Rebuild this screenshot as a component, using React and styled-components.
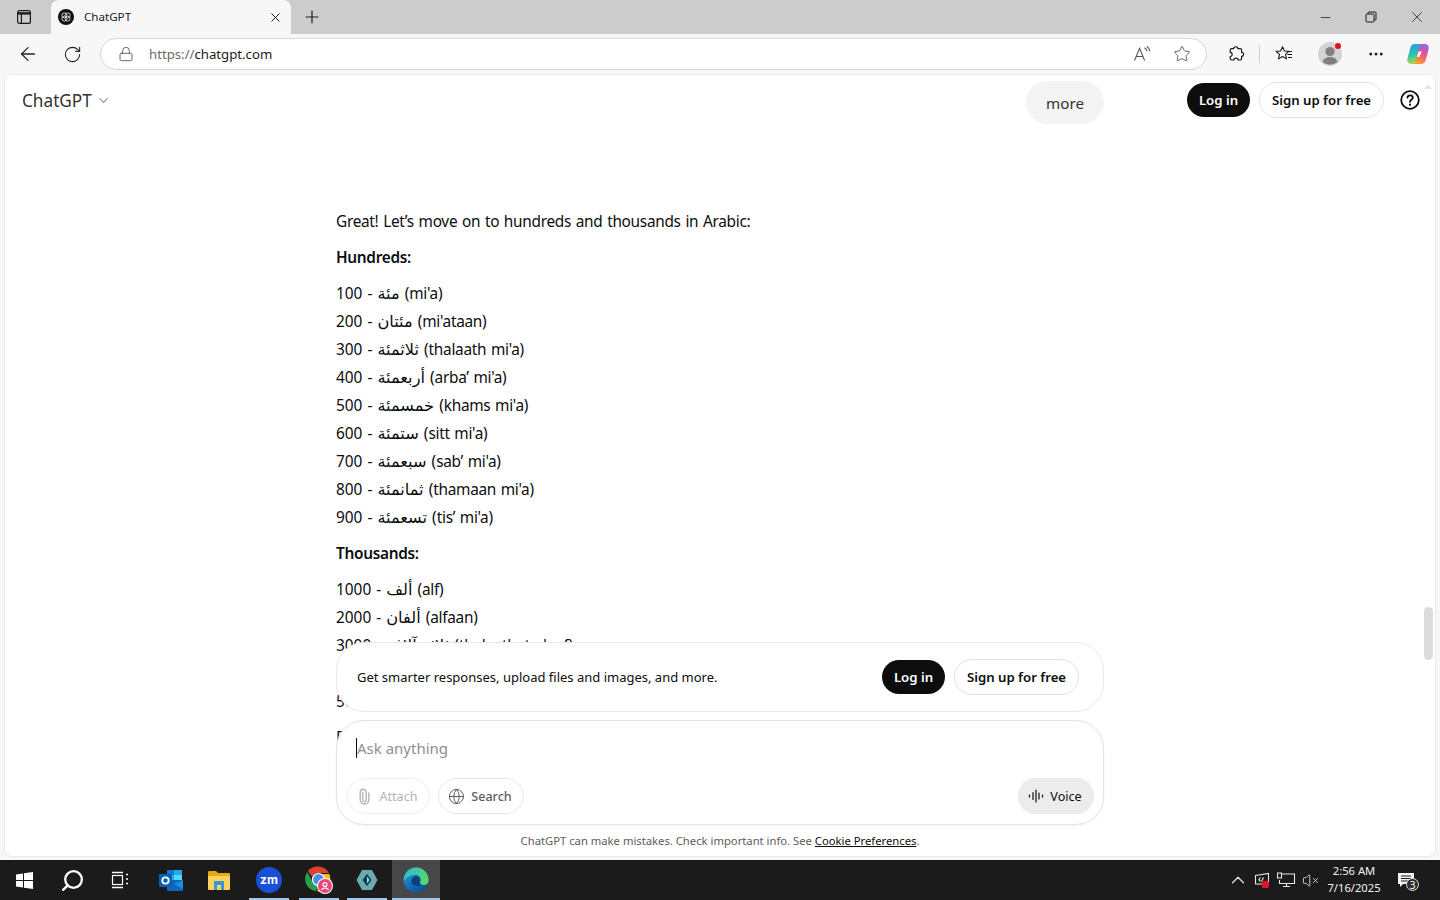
import React from 'react';
import styled, { createGlobalStyle } from 'styled-components';
import {
	ArrowLeft, ChevronDown, ChevronUp, Globe, Lock, Minus, MoreHorizontal,
	Plus, RotateCw, Search as SearchIcon, Star, VolumeX, X,
} from 'lucide-react';

const FONT = '"Noto Sans", "DejaVu Sans", sans-serif';

const GlobalStyle = createGlobalStyle`
	* { box-sizing: border-box; }
	html, body { margin: 0; height: 100%; overflow: hidden; }
	body { font-family: ${FONT}; color: #0d0d0d; background: #f7f7f7; }
	#root { height: 100%; }
`;

const Window = styled.div`
	height: 900px;
	display: flex;
	flex-direction: column;
	background: #f7f7f7;
`;

/* browser chrome */
const TabStrip = styled.div`
	height: 34px;
	flex: none;
	display: flex;
	align-items: center;
	background: #cccccc;
`;

const StripSlot = styled.div`
	width: ${(p) => p.$w || 48}px;
	height: 100%;
	flex: none;
	display: flex;
	align-items: center;
	justify-content: center;
	color: #1a1a1a;
`;

const Tab = styled.div`
	width: 240px;
	height: 34px;
	margin-left: 3px;
	padding: 0 8px 0 7px;
	flex: none;
	display: flex;
	align-items: center;
	background: #f7f7f7;
	border-radius: 8px 8px 0 0;
`;

const TabTitle = styled.span`
	margin-left: 10px;
	padding-bottom: 2px;
	flex: 1;
	font-size: 11.6px;
	color: #1a1a1a;
`;

const StripSpacer = styled.div`
	flex: 1;
`;

const Toolbar = styled.div`
	height: 40px;
	flex: none;
	padding-left: 6px;
	padding-right: 3px;
	display: flex;
	align-items: center;
	background: #f7f7f7;
`;

const ToolSlot = styled.div`
	position: relative;
	width: ${(p) => p.$w || 46}px;
	height: 32px;
	flex: none;
	display: flex;
	align-items: center;
	justify-content: center;
	color: #262626;
`;

const AddressBar = styled.div`
	height: 32px;
	flex: 1;
	margin: 0 6px 0 6px;
	padding: 0 15px 0 17px;
	display: flex;
	align-items: center;
	background: #ffffff;
	border: 1px solid #d6d6d6;
	border-radius: 16px;
	color: #555555;
`;

const Url = styled.div`
	flex: 1;
	margin-left: 15px;
	font-size: 13.2px;
	color: #1a1a1a;
	span { color: #6b6b6b; }
`;

const ReadAloud = styled.div`
	margin-right: 22px;
	display: flex;
	color: #555555;
`;

const ToolDivider = styled.div`
	width: 1px;
	height: 18px;
	margin-right: 1px;
	flex: none;
	background: #d0d0d0;
`;

const ProfileDot = styled.i`
	position: absolute;
	top: 5px;
	left: 28px;
	width: 6px;
	height: 6px;
	border-radius: 50%;
	background: #e0101a;
`;

/* page */
const Frame = styled.main`
	position: relative;
	flex: 1;
	min-height: 0;
	margin: 0 4px 3px;
	overflow: hidden;
	background: #ffffff;
	border: 1px solid #ebebeb;
	border-radius: 8px;
`;

const Thread = styled.div`
	width: 768px;
	margin: 6px auto 0;
	display: flex;
	flex-direction: column;
`;

const UserBubble = styled.div`
	align-self: flex-end;
	height: 43px;
	margin-bottom: 84px;
	padding: 0 20px;
	display: flex;
	align-items: center;
	font-size: 15.2px;
	background: #f4f4f4;
	border-radius: 22px;
	color: #333333;
`;

const Para = styled.p`
	margin: 0 0 8px;
	font-size: 15.4px;
	line-height: 28px;
	letter-spacing: -0.3px;
	word-spacing: 1px;
	font-weight: ${(p) => (p.$bold ? 600 : 400)};
`;

const NumberList = styled.div`
	margin-bottom: 8px;
`;

const NumberRow = styled.div`
	font-size: 15.4px;
	line-height: 28px;
	letter-spacing: -0.3px;
	word-spacing: 1px;
`;

const Arabic = styled.span`
	font-size: 16.2px;
	line-height: 1;
	letter-spacing: 0;
`;

const PageHeader = styled.header`
	position: absolute;
	top: 0;
	left: 0;
	right: 0;
	height: 50px;
	padding: 0 14px 0 17px;
	display: flex;
	align-items: center;
`;

const Brand = styled.div`
	flex: 1;
	display: flex;
	align-items: center;
	gap: 4px;
	font-size: 17.2px;
	color: #333333;
	svg { color: #8f8f8f; margin-top: 1px; }
`;

const PillButton = styled.button`
	height: ${(p) => (p.$primary ? 34 : 36)}px;
	padding: 0;
	width: ${(p) => (p.$primary ? 63 : 125)}px;
	flex: none;
	font-family: ${FONT};
	font-size: 13.2px;
	font-weight: 600;
	border-radius: 18px;
	color: ${(p) => (p.$primary ? '#ffffff' : '#0d0d0d')};
	background: ${(p) => (p.$primary ? '#0d0d0d' : '#ffffff')};
	border: ${(p) => (p.$primary ? 'none' : '1px solid #e3e3e3')};
	& + & { margin-left: 9px; }
`;

const HelpSlot = styled.div`
	margin-left: 15px;
	display: flex;
`;

const ScrollThumb = styled.div`
	position: absolute;
	top: 532px;
	right: 2px;
	width: 9px;
	height: 53px;
	border-radius: 5px;
	background: #dcdcdc;
`;

const ScrollArrow = styled.div`
	position: absolute;
	top: 9px;
	right: 3px;
	width: 0;
	height: 0;
	border-left: 4px solid transparent;
	border-right: 4px solid transparent;
	border-bottom: 5px solid #e6e6e6;
`;

const Dock = styled.div`
	position: absolute;
	left: 0;
	right: 0;
	bottom: 7px;
	width: 768px;
	margin: 0 auto;
	display: flex;
	flex-direction: column;
	gap: 8px;
`;

const PromoCard = styled.div`
	height: 70px;
	padding: 0 24px 0 20px;
	display: flex;
	align-items: center;
	background: #ffffff;
	border: 1px solid #e8e8e8;
	border-radius: 28px;
`;

const PromoText = styled.div`
	flex: 1;
	font-size: 13px;
`;

const Composer = styled.div`
	height: 105px;
	padding: 17px 9px 10px 10px;
	display: flex;
	flex-direction: column;
	justify-content: space-between;
	background: #ffffff;
	border: 1px solid #e3e3e3;
	border-radius: 28px;
	box-shadow: 0 2px 4px rgba(0, 0, 0, 0.03);
`;

const Prompt = styled.div`
	height: 20px;
	margin-left: 9px;
	display: flex;
	align-items: center;
	font-size: 15px;
	color: #8f8f8f;
	border-left: 1px solid #0d0d0d;
`;

const ComposerActions = styled.div`
	display: flex;
	align-items: center;
	gap: 8px;
`;

const ActionChip = styled.div`
	width: ${(p) => p.$w}px;
	height: 36px;
	padding-right: ${(p) => (p.$muted ? 3 : 2)}px;
	display: flex;
	align-items: center;
	justify-content: center;
	gap: 6px;
	font-size: 12.6px;
	font-weight: ${(p) => (p.$muted ? 400 : 500)};
	border-radius: 18px;
	color: ${(p) => (p.$muted ? '#b4b4b4' : '#5d5d5d')};
	border: 1px solid ${(p) => (p.$muted ? '#f1f1f1' : '#e6e6e6')};
`;

const VoiceChip = styled(ActionChip)`
	margin-left: auto;
	border: none;
	background: #ececec;
	color: #0d0d0d;
	font-weight: 400;
`;

const Disclaimer = styled.div`
	height: 16px;
	text-align: center;
	font-size: 11.25px;
	line-height: 16px;
	color: #5d5d5d;
	a { color: #0d0d0d; text-decoration: underline; }
`;

/* taskbar */
const Taskbar = styled.footer`
	height: 40px;
	flex: none;
	display: flex;
	align-items: center;
	background: #1b1b1b;
	color: #ffffff;
`;

const TaskItem = styled.div`
	position: relative;
	width: 48px;
	height: 40px;
	flex: none;
	margin-left: ${(p) => p.$gap || 0}px;
	display: flex;
	align-items: center;
	justify-content: center;
	background: ${(p) => (p.$active ? '#474747' : 'transparent')};
	${(p) => p.$open && `
		&::after {
			content: '';
			position: absolute;
			left: ${p.$active ? 0 : 4}px;
			right: ${p.$active ? 0 : 4}px;
			bottom: 0;
			height: 2px;
			background: #9cc9ee;
		}
	`}
`;

const Tray = styled.div`
	margin-left: auto;
	height: 100%;
	padding-right: 4px;
	display: flex;
	align-items: center;
`;

const TraySlot = styled.div`
	width: 24px;
	flex: none;
	display: flex;
	align-items: center;
	justify-content: center;
	color: #e8e8e8;
`;

const Clock = styled.div`
	width: 64px;
	padding-bottom: 2px;
	text-align: center;
	font-size: 11.2px;
	line-height: 17px;
	color: #f2f2f2;
`;

const NotifyBadge = styled.span`
	position: absolute;
	right: -5px;
	bottom: -4px;
	width: 13px;
	height: 13px;
	display: flex;
	align-items: center;
	justify-content: center;
	font-size: 10px;
	border-radius: 50%;
	background: #2d2d2d;
	border: 1px solid #e0e0e0;
	color: #ffffff;
`;

const NotifySlot = styled.div`
	position: relative;
	width: 16px;
	height: 14px;
	margin-left: 12px;
	margin-right: 22px;
	display: flex;
`;

/* drawn icons */
const WindowTabsIcon = () => (
	<svg width="16" height="16" viewBox="0 0 16 16" fill="none" stroke="#1a1a1a" strokeWidth="1.2">
		<rect x="1.6" y="1.6" width="12.8" height="12.8" rx="2" />
		<path d="M1.6 4.4h12.8" strokeWidth="2.4" />
		<path d="M5.4 4.4v10" />
	</svg>
);

const Favicon = () => (
	<svg width="16" height="16" viewBox="0 0 16 16" fill="none">
		<circle cx="8" cy="8" r="8" fill="#111111" />
		<g stroke="#d8d8d8" strokeWidth="0.9">
			<circle cx="6.4" cy="6.4" r="2.5" />
			<circle cx="9.6" cy="6.4" r="2.5" />
			<circle cx="6.4" cy="9.6" r="2.5" />
			<circle cx="9.6" cy="9.6" r="2.5" />
		</g>
	</svg>
);

const RestoreIcon = () => (
	<svg width="12" height="12" viewBox="0 0 12 12" fill="none" stroke="#1a1a1a" strokeWidth="1">
		<rect x="1" y="3" width="8" height="8" rx="1" />
		<path d="M3 3V2a1 1 0 0 1 1-1h6a1 1 0 0 1 1 1v6a1 1 0 0 1-1 1H9" />
	</svg>
);

const ReadAloudIcon = () => (
	<svg width="18" height="18" viewBox="0 0 18 18" fill="none" stroke="currentColor" strokeWidth="1.1">
		<path d="M1.5 15.5 6.6 3.4l5 12.1M3.2 11.5h6.8" />
		<path d="M11.5 2.8c1.4.7 2.2 1.8 2.4 3.4M13.8 1.6c1.8 1 2.8 2.5 3 4.6" />
	</svg>
);

const PuzzleIcon = () => (
	<svg width="18" height="18" viewBox="0 0 18 18" fill="none" stroke="#1a1a1a" strokeWidth="1.2" strokeLinejoin="round">
		<path d="M6.8 3.600c-.3-2.500 4.200-2.500 4 0h2.400c.8 0 1.400.6 1.400 1.400v2.300c2.600-.3 2.600 4.300 0 4v2.300c0 .8-.6 1.400-1.400 1.400h-2.200c.3-2.600-4.300-2.600-4 0H4.600c-.8 0-1.400-.6-1.400-1.400v-2.100c2.600.3 2.600-4.400 0-4V5c0-.8.6-1.400 1.400-1.400z" />
	</svg>
);

const FavoritesIcon = () => (
	<svg width="18" height="18" viewBox="0 0 18 18" fill="none" stroke="#1a1a1a" strokeWidth="1.1" strokeLinejoin="round">
		<path d="M7.500 1.800 9.400 6l4.500.4-3.400 3 1 4.500-4-2.400-4 2.400 1-4.500-3.400-3L5.600 6z" />
		<path d="M12.500 9.500h4.500M13 12.500h4M12.500 6.500h4.500" />
	</svg>
);

const ProfileIcon = () => (
	<svg width="24" height="24" viewBox="0 0 24 24">
		<circle cx="12" cy="12" r="12" fill="#d3d3d3" />
		<circle cx="12" cy="9.500" r="4.600" fill="#7f7f7f" />
		<path d="M4.500 20c1-3.600 4-5 7.500-5s6.500 1.400 7.500 5a12 12 0 0 1-15 0z" fill="#7f7f7f" />
	</svg>
);

const CopilotIcon = () => (
	<svg width="24" height="24" viewBox="0 0 24 24">
		<defs>
			<linearGradient id="cpA" x1="0.3" y1="0" x2="0.5" y2="1">
				<stop offset="0" stopColor="#2a9be8" />
				<stop offset="0.5" stopColor="#29c3b0" />
				<stop offset="1" stopColor="#b5d83a" />
			</linearGradient>
			<linearGradient id="cpB" x1="0.7" y1="0" x2="0.4" y2="1">
				<stop offset="0" stopColor="#8f6be8" />
				<stop offset="0.5" stopColor="#ee4f8c" />
				<stop offset="1" stopColor="#f7a12c" />
			</linearGradient>
		</defs>
		<path d="M8.500 2h7.500l-5 17.500c-.4 1.500-1.500 2.500-3 2.500H5.200C2.500 22 .6 19.500 1.400 16.800L4.500 5.200C5 3.300 6.500 2 8.500 2z" fill="url(#cpA)" />
		<path d="M15.500 22H8.500l5-17.500C14 3 15 2 16.500 2h2.300c2.700 0 4.600 2.500 3.800 5.200l-3.100 11.600c-.5 1.900-2 3.200-4 3.200z" fill="url(#cpB)" />
		<path d="M12.600 9.500h3.200l-2.400 5.500h-2.400z" fill="#ffffff" />
	</svg>
);

const HelpIcon = () => (
	<svg width="22" height="22" viewBox="0 0 22 22" fill="none" stroke="#0d0d0d" strokeWidth="1.800" strokeLinecap="round">
		<circle cx="11" cy="11" r="8.800" />
		<path d="M8.400 8.700c.2-1.500 1.300-2.300 2.700-2.300 1.500 0 2.700.9 2.700 2.300 0 2.100-2.800 2-2.800 4.100" />
		<path d="M11 15.700v.1" strokeWidth="2.200" />
	</svg>
);

const ClipIcon = () => (
	<svg width="17" height="17" viewBox="0 0 17 17" fill="none" stroke="currentColor" strokeWidth="1.400" strokeLinecap="round">
		<path d="M6.800 5v7.200c0 1 .7 1.700 1.700 1.700s1.700-.7 1.700-1.700V4.500c0-1.900-1.400-3.200-3-3.200S4.200 2.600 4.200 4.500V12c0 2.200 1.900 4 4.300 4s4.300-1.800 4.300-4V5" />
	</svg>
);

const VoiceBars = () => (
	<svg width="16" height="16" viewBox="0 0 16 16" fill="none" stroke="#0d0d0d" strokeWidth="1.200" strokeLinecap="round">
		<path d="M1.500 7v2M5 4.500v7M8 2v12M11 5v6M14.500 7v2" />
	</svg>
);

const WindowsLogo = () => (
	<svg width="17" height="17" viewBox="0 0 17 17" fill="#ffffff">
		<path d="M0 2.400 7 1.400V8H0zM8 1.300 17 0v8H8zM0 9h7v6.600L0 14.600zM8 9h9v8l-9-1.300z" />
	</svg>
);

const TaskSearchIcon = () => (
	<SearchIcon size={25} strokeWidth={2.2} color="#ffffff" style={{ transform: 'scaleX(-1)' }} />
);

const TaskViewIcon = () => (
	<svg width="18" height="18" viewBox="0 0 18 18" fill="none" stroke="#ffffff" strokeWidth="1.200">
		<rect x="1.500" y="4.500" width="10" height="9" />
		<path d="M1 1.500h11M1 16.500h11M15 3.500h2M15 8h2M15 12.500h2" strokeWidth="1.500" />
	</svg>
);

const OutlookLogo = () => (
	<svg width="26" height="24" viewBox="0 0 26 24">
		<path d="M9 2h15v10H9z" fill="#28a8ea" />
		<path d="M9 2h7v5H9z" fill="#0f78d4" />
		<path d="M16 7h8v5h-8z" fill="#50d9ff" />
		<path d="M9 12h16v10a1 1 0 0 1-1 1H10a1 1 0 0 1-1-1z" fill="#1066b8" />
		<path d="M25 12v9l-9-5z" fill="#1a8fe0" />
		<rect x="1" y="6" width="13" height="13" rx="1" fill="#0a5fb0" />
		<circle cx="7.500" cy="12.500" r="3.200" fill="none" stroke="#ffffff" strokeWidth="1.800" />
	</svg>
);

const ExplorerLogo = () => (
	<svg width="24" height="22" viewBox="0 0 24 22">
		<path d="M1 3a1 1 0 0 1 1-1h7l2 2h11a1 1 0 0 1 1 1v3H1z" fill="#e6a817" />
		<path d="M1 7h22v13a1 1 0 0 1-1 1H2a1 1 0 0 1-1-1z" fill="#fbd35c" />
		<path d="M7 12h10v9h-3v-5h-4v5H7z" fill="#3a95d8" />
	</svg>
);

const ZoomLogo = () => (
	<svg width="26" height="26" viewBox="0 0 26 26">
		<circle cx="13" cy="13" r="13" fill="#1c4fd8" />
		<text x="13" y="17" textAnchor="middle" fontSize="12" fontWeight="700" fill="#ffffff" fontFamily="Inter, sans-serif">zm</text>
	</svg>
);

const ChromeLogo = () => (
	<svg width="30" height="30" viewBox="0 0 30 30">
		<path d="M14 1.500a12.500 12.500 0 0 1 11 6.500H14a6 6 0 0 0-5.700 4.100L3.800 6A12.500 12.500 0 0 1 14 1.500z" fill="#e0402f" />
		<path d="M3.200 7 8.800 17a6 6 0 0 0 6.200 3l-3.300 6.300A12.500 12.500 0 0 1 3.200 7z" fill="#2a9d4a" />
		<path d="M25.300 9A12.500 12.500 0 0 1 13 26.500l5.300-9.700A6 6 0 0 0 18.500 9z" fill="#f4c020" />
		<circle cx="14.500" cy="14.500" r="6" fill="#4a8de8" stroke="#ffffff" strokeWidth="1.200" />
		<circle cx="21" cy="21" r="8" fill="#ffffff" />
		<circle cx="21" cy="21" r="7" fill="#e8447e" />
		<circle cx="21" cy="19.600" r="2" fill="none" stroke="#ffffff" strokeWidth="1.100" />
		<path d="M17.300 25c.9-1.500 2.100-2 3.700-2s2.800.5 3.700 2" fill="none" stroke="#ffffff" strokeWidth="1.100" />
	</svg>
);

const HexLogo = () => (
	<svg width="24" height="24" viewBox="0 0 24 24">
		<path d="M7 2h10l5.500 10L17 22H7L1.500 12z" fill="#6aa9b0" />
		<path d="M12 6l4.500 6-4.500 6-4.500-6z" fill="#123c4a" />
		<path d="M12 8.500l2.500 3.500-2.500 3.500z" fill="#a5e0ea" />
	</svg>
);

const EdgeLogo = () => (
	<svg width="26" height="26" viewBox="0 0 26 26">
		<defs>
			<linearGradient id="edA" x1="0" y1="0" x2="1" y2="0.600">
				<stop offset="0" stopColor="#2fb8d8" />
				<stop offset="1" stopColor="#58d868" />
			</linearGradient>
			<linearGradient id="edB" x1="0" y1="0" x2="0.700" y2="1">
				<stop offset="0" stopColor="#1fa0e8" />
				<stop offset="1" stopColor="#0b4f98" />
			</linearGradient>
		</defs>
		<circle cx="13" cy="13" r="12.500" fill="url(#edB)" />
		<path d="M13 .5A12.500 12.500 0 0 1 25.500 14c0 2.500-2.300 4-5 4-2.300 0-3.500-1.200-3.500-2.300 0-1 .8-1.500.8-3 0-2.700-2.400-5-5.800-5C8 7.700 3.500 10 .8 14 .5 6.500 6.300.5 13 .5z" fill="url(#edA)" />
		<path d="M8.500 14.500c0-3 2.400-5.500 5-5.800 2.200 1 3.500 2.700 3.300 4.800-.6 1.800-.2 3.700 1.900 4.700-3.800 1.200-10.200.4-10.200-3.700z" fill="#0c3f7c" />
	</svg>
);

const TrayRemoteIcon = () => (
	<svg width="18" height="18" viewBox="0 0 18 18" fill="none" stroke="#e8e8e8" strokeWidth="1.100">
		<path d="M2.500 4.500 15.500 2.500v10.500h-13z" />
		<path d="M7.500 6.500 5.800 8.800l1.700 1.700M10.500 6.500l-2 4" />
		<rect x="9" y="10" width="7" height="7" rx="1.500" fill="#e8102a" stroke="none" />
	</svg>
);

const TrayNetworkIcon = () => (
	<svg width="20" height="18" viewBox="0 0 20 18" fill="none" stroke="#e8e8e8" strokeWidth="1.100">
		<path d="M6 3h12.500v9.500h-15V9" />
		<path d="M1.500 2h4v5h-4zM10.500 12.500v3M7 15.500h7" />
	</svg>
);

const NotifyIcon = () => (
	<svg width="16" height="14" viewBox="0 0 16 14">
		<path d="M0 0h16v11H5l-3 3v-3H0z" fill="#f2f2f2" />
		<path d="M3 3h10M3 5.500h10M3 8h7" stroke="#1b1b1b" strokeWidth="1" />
	</svg>
);

const HUNDREDS = [
	['100', 'مئة', "mi'a"],
	['200', 'مئتان', "mi'ataan"],
	['300', 'ثلاثمئة', "thalaath mi'a"],
	['400', 'أربعمئة', "arba’ mi'a"],
	['500', 'خمسمئة', "khams mi'a"],
	['600', 'ستمئة', "sitt mi'a"],
	['700', 'سبعمئة', "sab’ mi'a"],
	['800', 'ثمانمئة', "thamaan mi'a"],
	['900', 'تسعمئة', "tis’ mi'a"],
];

const THOUSANDS = [
	['1000', 'ألف', 'alf'],
	['2000', 'ألفان', 'alfaan'],
	['3000', 'ثلاثة آلاف', 'thalaathat alaaf'],
	['4000', 'أربعة آلاف', 'arba’at alaaf'],
	['5000', 'خمسة آلاف', 'khamsat alaaf'],
];

function Numbers({ rows }) {
	return (
		<NumberList>
			{rows.map(([num, arabic, latin]) => (
				<NumberRow key={num}>
					{num} - <Arabic>{arabic}</Arabic> ({latin})
				</NumberRow>
			))}
		</NumberList>
	);
}

export default function App() {
	return (
		<Window>
			<GlobalStyle />
			<TabStrip>
				<StripSlot>
					<WindowTabsIcon />
				</StripSlot>
				<Tab>
					<Favicon />
					<TabTitle>ChatGPT</TabTitle>
					<X size={15} strokeWidth={1.6} color="#1a1a1a" />
				</Tab>
				<StripSlot $w={42}>
					<Plus size={20} strokeWidth={1.4} />
				</StripSlot>
				<StripSpacer />
				<StripSlot $w={46}>
					<Minus size={15} strokeWidth={1.2} />
				</StripSlot>
				<StripSlot $w={46}>
					<RestoreIcon />
				</StripSlot>
				<StripSlot $w={46}>
					<X size={18} strokeWidth={1} />
				</StripSlot>
			</TabStrip>

			<Toolbar>
				<ToolSlot $w={44}>
					<ArrowLeft size={22} strokeWidth={1.4} />
				</ToolSlot>
				<ToolSlot $w={44}>
					<RotateCw size={19} strokeWidth={1.4} />
				</ToolSlot>
				<AddressBar>
					<Lock size={16} strokeWidth={1.3} />
					<Url>
						<span>https://</span>chatgpt.com
					</Url>
					<ReadAloud>
						<ReadAloudIcon />
					</ReadAloud>
					<Star size={18} strokeWidth={1.2} />
				</AddressBar>
				<ToolSlot>
					<PuzzleIcon />
				</ToolSlot>
				<ToolDivider />
				<ToolSlot>
					<FavoritesIcon />
				</ToolSlot>
				<ToolSlot>
					<ProfileIcon />
					<ProfileDot />
				</ToolSlot>
				<ToolSlot>
					<MoreHorizontal size={18} strokeWidth={2} />
				</ToolSlot>
				<ToolSlot $w={38}>
					<CopilotIcon />
				</ToolSlot>
			</Toolbar>

			<Frame>
				<Thread>
					<UserBubble>more</UserBubble>
					<Para>Great! Let’s move on to hundreds and thousands in Arabic:</Para>
					<Para $bold>Hundreds:</Para>
					<Numbers rows={HUNDREDS} />
					<Para $bold>Thousands:</Para>
					<Numbers rows={THOUSANDS} />
					<Para>Feel free</Para>
				</Thread>

				<PageHeader>
					<Brand>
						ChatGPT
						<ChevronDown size={15} strokeWidth={1.8} />
					</Brand>
					<PillButton $primary>Log in</PillButton>
					<PillButton>Sign up for free</PillButton>
					<HelpSlot>
						<HelpIcon />
					</HelpSlot>
				</PageHeader>

				<ScrollArrow />
				<ScrollThumb />

				<Dock>
					<PromoCard>
						<PromoText>Get smarter responses, upload files and images, and more.</PromoText>
						<PillButton $primary>Log in</PillButton>
						<PillButton>Sign up for free</PillButton>
					</PromoCard>
					<Composer>
						<Prompt>Ask anything</Prompt>
						<ComposerActions>
							<ActionChip $w={83} $muted>
								<ClipIcon />
								Attach
							</ActionChip>
							<ActionChip $w={86}>
								<Globe size={17} strokeWidth={1.4} />
								Search
							</ActionChip>
							<VoiceChip $w={76}>
								<VoiceBars />
								Voice
							</VoiceChip>
						</ComposerActions>
					</Composer>
					<Disclaimer>
						ChatGPT can make mistakes. Check important info. See <a href="#cookies">Cookie Preferences</a>.
					</Disclaimer>
				</Dock>
			</Frame>

			<Taskbar>
				<TaskItem><WindowsLogo /></TaskItem>
				<TaskItem><TaskSearchIcon /></TaskItem>
				<TaskItem><TaskViewIcon /></TaskItem>
				<TaskItem $gap={3}><OutlookLogo /></TaskItem>
				<TaskItem><ExplorerLogo /></TaskItem>
				<TaskItem $gap={2} $open><ZoomLogo /></TaskItem>
				<TaskItem $gap={2} $open><ChromeLogo /></TaskItem>
				<TaskItem $open><HexLogo /></TaskItem>
				<TaskItem $gap={1} $open $active><EdgeLogo /></TaskItem>
				<Tray>
					<TraySlot><ChevronUp size={22} strokeWidth={1.3} /></TraySlot>
					<TraySlot><TrayRemoteIcon /></TraySlot>
					<TraySlot><TrayNetworkIcon /></TraySlot>
					<TraySlot><VolumeX size={17} strokeWidth={1.2} /></TraySlot>
					<Clock>
						2:56 AM
						<br />
						7/16/2025
					</Clock>
					<NotifySlot>
						<NotifyIcon />
						<NotifyBadge>3</NotifyBadge>
					</NotifySlot>
				</Tray>
			</Taskbar>
		</Window>
	);
}
